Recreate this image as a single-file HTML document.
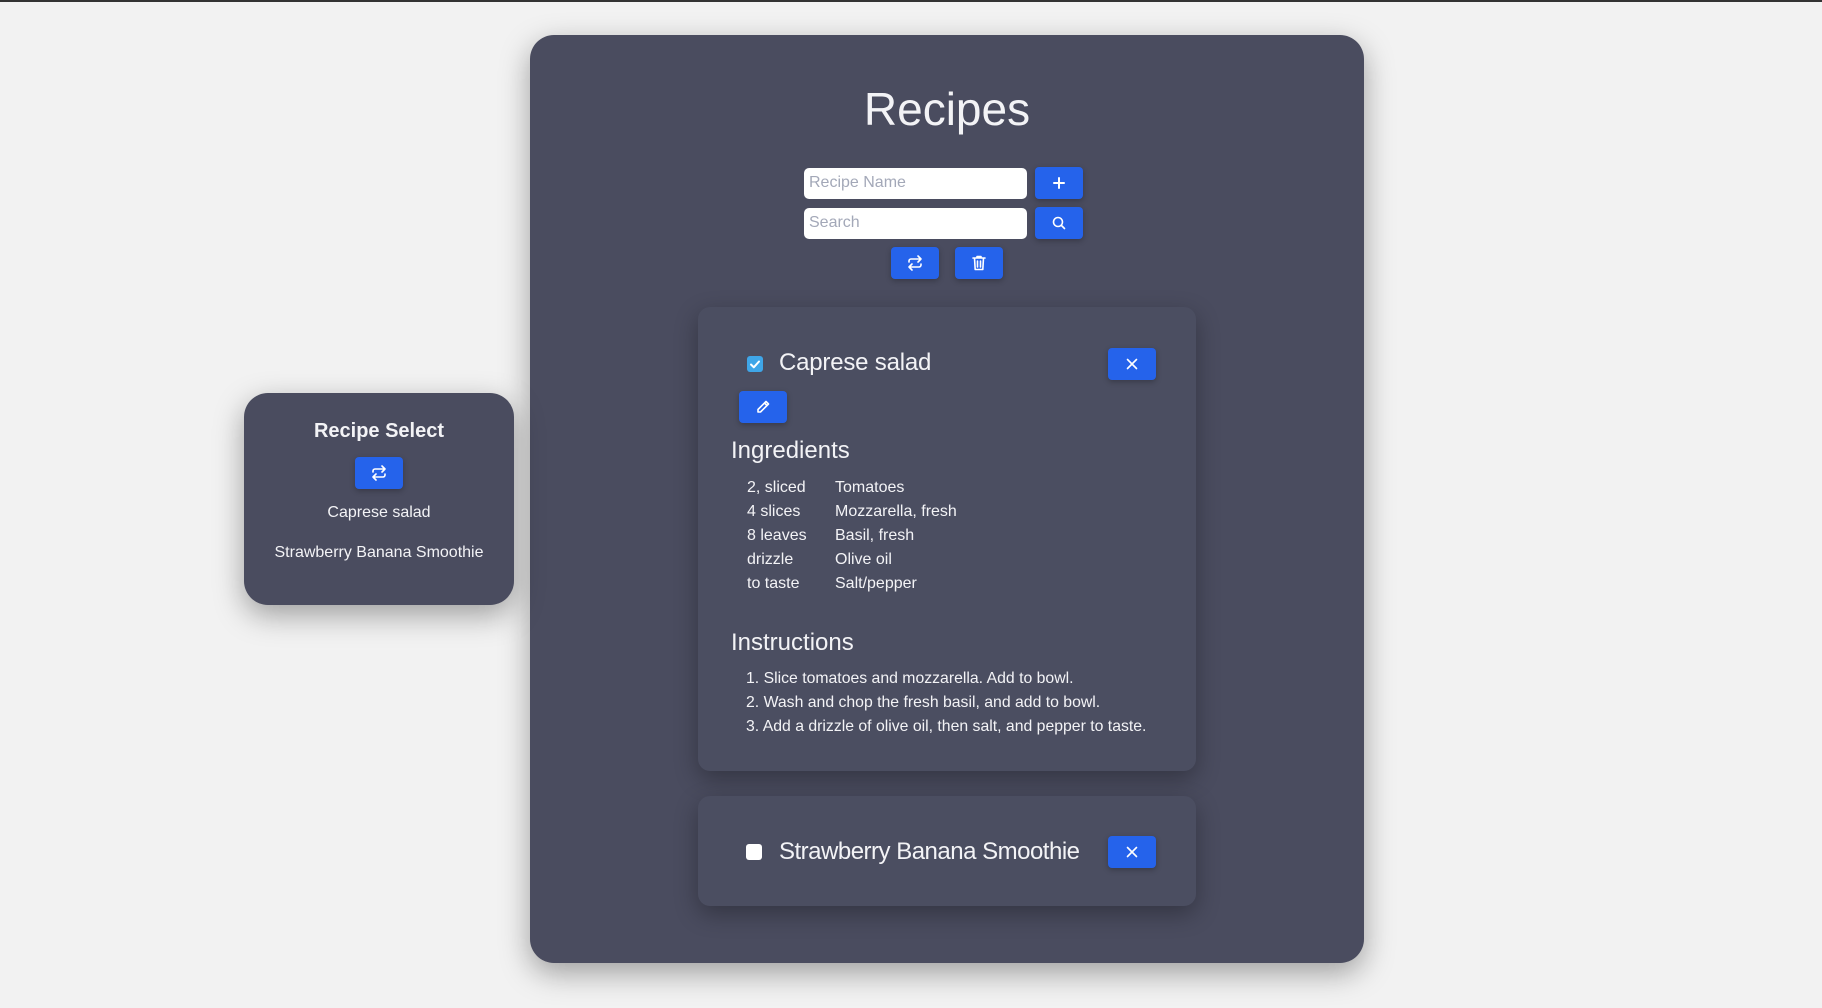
<!DOCTYPE html>
<html><head><style>
*{box-sizing:border-box;margin:0;padding:0}
body{width:1822px;height:1008px;background:#f2f2f2;font-family:"Liberation Sans","DejaVu Sans",sans-serif;color:#f3f3f6;position:relative;overflow:hidden;border-top:2px solid #333}
.abs{position:absolute}
.panel{background:#4a4c5f;border-radius:24px;box-shadow:0 10px 30px rgba(0,0,0,.35)}
.card{background:#4b4e61;border-radius:12px;box-shadow:0 8px 24px rgba(0,0,0,.3)}
.btn{position:absolute;width:48px;height:32px;background:#2563eb;border-radius:4px;display:flex;align-items:center;justify-content:center;box-shadow:0 2px 6px rgba(0,0,0,.25)}
.inp{position:absolute;left:804px;width:223px;height:31px;background:#fff;border-radius:5px;color:#a3a8b8;font-size:16px;padding:6px 5px}
.t{position:absolute;white-space:nowrap}
svg{fill:none;stroke:#fff;stroke-width:1.6;stroke-linecap:round;stroke-linejoin:round}
.cb{position:absolute;width:16px;height:16px;border-radius:3px}
</style></head><body>
<div class="abs panel" style="left:530px;top:33px;width:834px;height:928px"></div>
<div class="t" style="left:530px;width:834px;text-align:center;top:80px;font-size:46px">Recipes</div>
<div class="inp" style="top:166px">Recipe Name</div>
<div class="btn" style="left:1035px;top:165px"><svg width="16" height="16" viewBox="0 0 16 16"><path d="M8 3v10M3 8h10" stroke-width="2"/></svg></div>
<div class="inp" style="top:206px">Search</div>
<div class="btn" style="left:1035px;top:205px"><svg width="16" height="16" viewBox="0 0 16 16"><circle cx="7" cy="7" r="4.5"/><path d="M10.5 10.5l3 3"/></svg></div>
<div class="btn" style="left:891px;top:245px"><svg width="18" height="18" viewBox="0 0 18 18"><path d="M3 8V7a2 2 0 0 1 2-2h10M12 2l3 3-3 3M15 10v1a2 2 0 0 1-2 2H3M6 16l-3-3 3-3"/></svg></div>
<div class="btn" style="left:955px;top:245px"><svg width="18" height="18" viewBox="0 0 18 18"><path d="M3 4h12M7 4V2.5h4V4M4.5 4l.7 11.5h7.6L13.5 4M7.5 7v6M10.5 7v6"/></svg></div>

<div class="abs card" style="left:698px;top:305px;width:498px;height:464px"></div>
<div class="cb" style="left:747px;top:354px;background:#3fa6e8"><svg width="16" height="16" viewBox="0 0 16 16"><path d="M4 8.5l2.8 2.8L12 5.5" stroke-width="2"/></svg></div>
<div class="t" style="left:779px;top:347px;font-size:24px;letter-spacing:-0.2px">Caprese salad</div>
<div class="btn" style="left:1108px;top:346px"><svg width="14" height="14" viewBox="0 0 14 14"><path d="M2.5 2.5l9 9M11.5 2.5l-9 9"/></svg></div>
<div class="btn" style="left:739px;top:389px"><svg width="16" height="16" viewBox="0 0 16 16"><path d="M11 2.5l2.5 2.5L5.5 13H3v-2.5zM9.5 4l2.5 2.5"/></svg></div>
<div class="t" style="left:731px;top:435px;font-size:24px">Ingredients</div>
<div class="t" style="left:747px;top:474px;font-size:16px;line-height:24px">2, sliced<br>4 slices<br>8 leaves<br>drizzle<br>to taste</div>
<div class="t" style="left:835px;top:474px;font-size:16px;line-height:24px">Tomatoes<br>Mozzarella, fresh<br>Basil, fresh<br>Olive oil<br>Salt/pepper</div>
<div class="t" style="left:731px;top:627px;font-size:24px">Instructions</div>
<div class="t" style="left:746px;top:665px;font-size:15.8px;line-height:24px">1. Slice tomatoes and mozzarella. Add to bowl.<br>2. Wash and chop the fresh basil, and add to bowl.<br>3. Add a drizzle of olive oil, then salt, and pepper to taste.</div>

<div class="abs card" style="left:698px;top:794px;width:498px;height:110px"></div>
<div class="cb" style="left:746px;top:842px;background:#fff"></div>
<div class="t" style="left:779px;top:836px;font-size:24px;letter-spacing:-0.5px">Strawberry Banana Smoothie</div>
<div class="btn" style="left:1108px;top:834px"><svg width="14" height="14" viewBox="0 0 14 14"><path d="M2.5 2.5l9 9M11.5 2.5l-9 9"/></svg></div>

<div class="abs panel" style="left:244px;top:391px;width:270px;height:212px"></div>
<div class="t" style="left:244px;width:270px;text-align:center;top:418px;font-size:20px;font-weight:bold">Recipe Select</div>
<div class="btn" style="left:355px;top:455px"><svg width="18" height="18" viewBox="0 0 18 18"><path d="M3 8V7a2 2 0 0 1 2-2h10M12 2l3 3-3 3M15 10v1a2 2 0 0 1-2 2H3M6 16l-3-3 3-3"/></svg></div>
<div class="t" style="left:244px;width:270px;text-align:center;top:502px;font-size:16px">Caprese salad</div>
<div class="t" style="left:244px;width:270px;text-align:center;top:542px;font-size:16px">Strawberry Banana Smoothie</div>
</body></html>
